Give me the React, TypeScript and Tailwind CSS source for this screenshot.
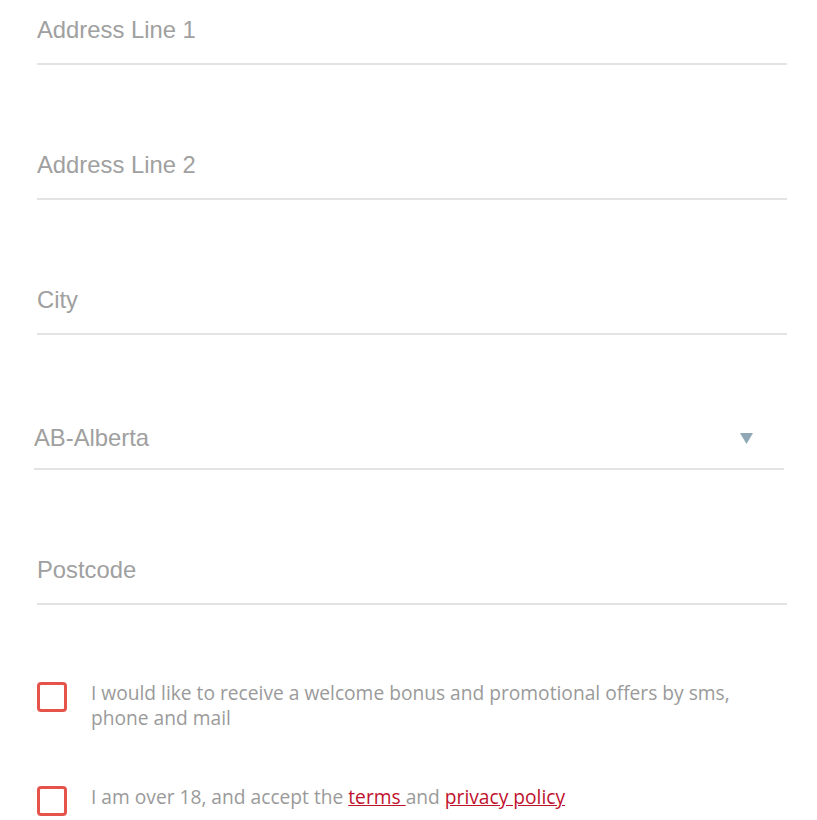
import { useState } from 'react';

const FIELDS = ['Address Line 1', 'Address Line 2', 'City'];

function TextField({ placeholder, className = '' }: { placeholder: string; className?: string }) {
  return (
    <div className={`border-b-2 border-[#e3e3e3] ${className}`}>
      <input
        placeholder={placeholder}
        className="block w-full h-[63px] pb-[3px] bg-transparent outline-none text-[23.8px] text-[#555] placeholder:text-[#a0a0a0] font-['Liberation_Sans',Arial,sans-serif]"
      />
    </div>
  );
}

function Checkbox({ checked, onChange }: { checked: boolean; onChange: () => void }) {
  return (
    <button
      onClick={onChange}
      className="shrink-0 mt-[2px] w-[30px] h-[30px] rounded-[4px] border-[3px] border-[#e5534b] bg-white flex items-center justify-center"
      aria-pressed={checked}
    >
      {checked && <span className="block w-[14px] h-[14px] bg-[#e5534b] rounded-[2px]" />}
    </button>
  );
}

export default function App() {
  const [promo, setPromo] = useState(false);
  const [age, setAge] = useState(false);

  return (
    <div className="w-[817px] h-[820px] overflow-hidden bg-white">
      <div className="pl-[37px] w-[787px]">
        {FIELDS.map((f, i) => (
          <TextField key={f} placeholder={f} className={i === 0 ? '' : 'mt-[70px]'} />
        ))}

        {/* province select */}
        <div className="mt-[70px] -ml-[3px] w-[750px] border-b-2 border-[#e3e3e3]">
          <div className="h-[63px] pt-[3px] flex items-center justify-between text-[23.8px] text-[#a0a0a0] font-['Liberation_Sans',Arial,sans-serif]">
            <span>AB-Alberta</span>
            <svg width="13" height="11" viewBox="0 0 13 11" className="mr-[31px]">
              <path d="M0 0h13L6.5 11z" fill="#90a8b6" />
            </svg>
          </div>
        </div>

        <TextField placeholder="Postcode" className="mt-[70px]" />

        <div className="mt-[75px] flex gap-[24px] font-['Open_Sans','Noto_Sans',sans-serif] text-[19.2px] leading-[25px] text-[#9a9a9a]">
          <Checkbox checked={promo} onChange={() => setPromo(!promo)} />
          <p className="max-w-[660px]">I would like to receive a welcome bonus and promotional offers by sms, phone and mail</p>
        </div>

        <div className="mt-[54px] flex gap-[24px] font-['Open_Sans','Noto_Sans',sans-serif] text-[19.2px] leading-[25px] text-[#9a9a9a]">
          <Checkbox checked={age} onChange={() => setAge(!age)} />
          <p>
            I am over 18, and accept the{' '}
            <a href="#" className="text-[#c0112d] underline">terms </a>
            and{' '}
            <a href="#" className="text-[#c0112d] underline">privacy policy</a>
          </p>
        </div>
      </div>
    </div>
  );
}
